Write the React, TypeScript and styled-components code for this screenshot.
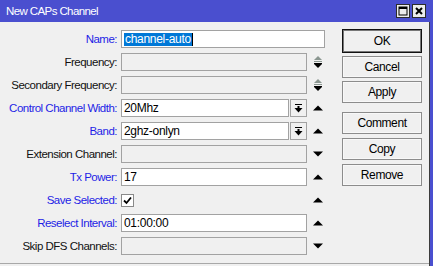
import React from "react";
import styled, { createGlobalStyle } from "styled-components";

const GlobalStyle = createGlobalStyle`
  html, body {
    margin: 0;
    padding: 0;
    background: #4a4fcf;
  }
  body {
    font-family: "Liberation Sans", Arial, sans-serif;
    font-size: 12px;
  }
`;

const Window = styled.div`
  width: 433px;
  height: 266px;
  display: flex;
  flex-direction: column;
  background: #4a4fcf;
  overflow: hidden;
`;

const TitleBar = styled.div`
  height: 22px;
  display: flex;
  align-items: center;
  padding: 0 7px 0 6px;
  color: #fff;
  font-size: 11.5px;
  letter-spacing: -0.6px;
`;

const TitleButtons = styled.div`
  margin-left: auto;
  display: flex;
  gap: 2px;
`;

const TitleButton = styled.div`
  width: 14px;
  height: 14px;
  box-sizing: border-box;
  border: 1px solid #2b2b2b;
  background: #ececec;
  display: flex;
  align-items: center;
  justify-content: center;
`;

const Body = styled.div`
  flex: 1;
  display: flex;
  flex-direction: column;
  background: #f0f0f0;
  border-right: 1px solid #3c3c3c;
  margin-right: 3px;
`;

const Content = styled.div`
  flex: 1;
  display: flex;
  align-items: flex-start;
  padding-top: 7px;
`;

const Form = styled.div`
  display: flex;
  flex-direction: column;
  gap: 5px;
  margin-top: 1px;
`;

const Row = styled.div`
  display: grid;
  grid-template-columns: 117px 186px 14px;
  column-gap: 4px;
  align-items: center;
  height: 18px;
`;

const Label = styled.div<{ $blue?: boolean }>`
  text-align: right;
  white-space: nowrap;
  font-size: 11.5px;
  color: ${(p) => (p.$blue ? "#1e1ee6" : "#111")};
  letter-spacing: -0.5px;
`;

const Field = styled.div<{ $wide?: boolean }>`
  display: flex;
  gap: 1px;
  height: 18px;
  grid-column: ${(p) => (p.$wide ? "2 / span 2" : "2")};
`;

const Input = styled.div<{ $disabled?: boolean }>`
  flex: 1;
  box-sizing: border-box;
  height: 18px;
  border: 1px solid #a2a2a2;
  background: ${(p) => (p.$disabled ? "#f0f0f0" : "#fff")};
  padding: 0 2px;
  display: flex;
  align-items: center;
  color: #000;
  white-space: nowrap;
  letter-spacing: -0.3px;
`;

const Selected = styled.span`
  background: #0078d7;
  color: #fff;
  padding: 0 1px;
  line-height: 13px;
  border-right: 1px solid #000;
`;

const DropButton = styled.div`
  width: 17px;
  height: 18px;
  box-sizing: border-box;
  border: 1px solid #a2a2a2;
  background: #f0f0f0;
  display: flex;
  align-items: center;
  justify-content: center;
`;

const Arrow = styled.div`
  display: flex;
  justify-content: center;
  align-items: center;
`;

const Checkbox = styled.div`
  width: 13px;
  height: 13px;
  box-sizing: border-box;
  border: 1px solid #8a8a8a;
  background: #fff;
  display: flex;
  align-items: center;
  justify-content: center;
`;

const Buttons = styled.div`
  margin-left: 17px;
  width: 80px;
  display: flex;
  flex-direction: column;
  gap: 3px;
`;

const ButtonGroup = styled.div`
  display: flex;
  flex-direction: column;
  gap: 4px;
  margin-top: 6px;
`;

const Button = styled.div<{ $default?: boolean }>`
  height: ${(p) => (p.$default ? "24px" : "22px")};
  box-sizing: border-box;
  border: 1px solid ${(p) => (p.$default ? "#111" : "#8c8c8c")};
  box-shadow: ${(p) => (p.$default ? "inset 0 0 0 1px #777" : "inset 0 0 0 1px #f8f8f8")};
  background: #f0f0f0;
  display: flex;
  align-items: center;
  justify-content: center;
  color: #000;
  letter-spacing: -0.4px;
`;

const StatusBar = styled.div`
  height: 2px;
  border-top: 1px solid #a8a8a8;
`;

const UpArrow = () => (
  <svg width="10" height="6" viewBox="0 0 10 6">
    <polygon points="0,5.5 10,5.5 5,0.5" fill="#000" />
  </svg>
);

const DownArrow = () => (
  <svg width="10" height="6" viewBox="0 0 10 6">
    <polygon points="0,0.5 10,0.5 5,5.5" fill="#000" />
  </svg>
);

const UpDown = () => (
  <svg width="10" height="14" viewBox="0 0 10 14">
    <polygon points="1,5 9,5 5,1" fill="#8a9690" />
    <rect x="1" y="6" width="8" height="1" fill="#8a9690" />
    <rect x="1" y="8" width="8" height="1" fill="#000" />
    <polygon points="1,9 9,9 5,13" fill="#000" />
  </svg>
);

const DropIcon = () => (
  <svg width="9" height="9" viewBox="0 0 9 9">
    <rect x="1" y="0" width="7" height="1" fill="#000" />
    <rect x="3.5" y="2" width="2" height="3" fill="#000" />
    <polygon points="0.5,4 8.5,4 4.5,8.5" fill="#000" />
  </svg>
);

type FieldRow = {
  label: string;
  blue?: boolean;
  value?: string;
  disabled?: boolean;
  drop?: boolean;
  arrow?: "up" | "down" | "updown";
};

const rows: FieldRow[] = [
  { label: "Frequency:", disabled: true, arrow: "updown" },
  { label: "Secondary Frequency:", disabled: true, arrow: "updown" },
  { label: "Control Channel Width:", blue: true, value: "20Mhz", drop: true, arrow: "up" },
  { label: "Band:", blue: true, value: "2ghz-onlyn", drop: true, arrow: "up" },
  { label: "Extension Channel:", disabled: true, arrow: "down" },
  { label: "Tx Power:", blue: true, value: "17", arrow: "up" },
];

const tailRows: FieldRow[] = [
  { label: "Reselect Interval:", blue: true, value: "01:00:00", arrow: "up" },
  { label: "Skip DFS Channels:", disabled: true, arrow: "down" },
];

const renderArrow = (arrow?: FieldRow["arrow"]) => {
  if (arrow === "up") return <UpArrow />;
  if (arrow === "down") return <DownArrow />;
  if (arrow === "updown") return <UpDown />;
  return null;
};

const renderRow = (row: FieldRow) => (
  <Row key={row.label}>
    <Label $blue={row.blue}>{row.label}</Label>
    <Field>
      <Input $disabled={row.disabled}>{row.value}</Input>
      {row.drop ? (
        <DropButton>
          <DropIcon />
        </DropButton>
      ) : null}
    </Field>
    <Arrow>{renderArrow(row.arrow)}</Arrow>
  </Row>
);

const App = () => {
  return (
    <Window>
      <GlobalStyle />
      <TitleBar>
        New CAPs Channel
        <TitleButtons>
          <TitleButton>
            <svg width="10" height="10" viewBox="0 0 10 10">
              <rect x="1" y="1" width="8" height="8" fill="none" stroke="#000" strokeWidth="1" />
              <rect x="1" y="1" width="8" height="2" fill="#000" />
            </svg>
          </TitleButton>
          <TitleButton>
            <svg width="10" height="10" viewBox="0 0 10 10">
              <path d="M2 2 L8 8 M8 2 L2 8" stroke="#000" strokeWidth="2" />
            </svg>
          </TitleButton>
        </TitleButtons>
      </TitleBar>
      <Body>
        <Content>
          <Form>
            <Row>
              <Label $blue>Name:</Label>
              <Field $wide>
                <Input>
                  <Selected>channel-auto</Selected>
                </Input>
              </Field>
            </Row>
            {rows.map(renderRow)}
            <Row>
              <Label $blue>Save Selected:</Label>
              <Checkbox>
                <svg width="9" height="9" viewBox="0 0 9 9">
                  <path d="M1 4.5 L3.5 7 L8 1.5" fill="none" stroke="#000" strokeWidth="1.8" />
                </svg>
              </Checkbox>
              <Arrow>
                <UpArrow />
              </Arrow>
            </Row>
            {tailRows.map(renderRow)}
          </Form>
          <Buttons>
            <Button $default>OK</Button>
            <Button>Cancel</Button>
            <Button>Apply</Button>
            <ButtonGroup>
              <Button>Comment</Button>
              <Button>Copy</Button>
              <Button>Remove</Button>
            </ButtonGroup>
          </Buttons>
        </Content>
        <StatusBar />
      </Body>
    </Window>
  );
};

export default App;
